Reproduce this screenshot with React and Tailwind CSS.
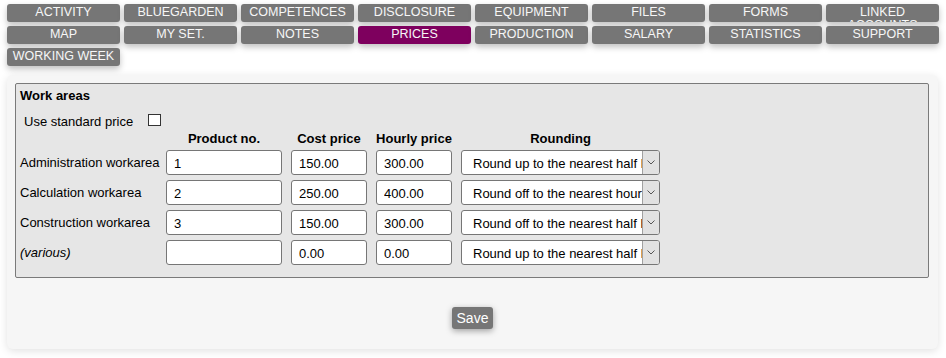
import React from "react";

const tabs = [
  "ACTIVITY", "BLUEGARDEN", "COMPETENCES", "DISCLOSURE", "EQUIPMENT", "FILES", "FORMS", "LINKED ACCOUNTS",
  "MAP", "MY SET.", "NOTES", "PRICES", "PRODUCTION", "SALARY", "STATISTICS", "SUPPORT",
  "WORKING WEEK",
];

const rows = [
  { label: "Administration workarea", no: "1", cost: "150.00", hourly: "300.00", rounding: "Round up to the nearest half hour" },
  { label: "Calculation workarea", no: "2", cost: "250.00", hourly: "400.00", rounding: "Round off to the nearest hour" },
  { label: "Construction workarea", no: "3", cost: "150.00", hourly: "300.00", rounding: "Round off to the nearest half hour" },
  { label: "(various)", italic: true, no: "", cost: "0.00", hourly: "0.00", rounding: "Round up to the nearest half hour" },
];

function Field({ value }) {
  return (
    <input
      readOnly
      defaultValue={value}
      className="w-full h-[25px] px-[7px] pt-[1px] border border-[#767676] rounded-[3px] bg-white text-[13px] text-black outline-none"
    />
  );
}

function Rounding({ value }) {
  return (
    <div className="flex w-[199px] h-[25px] border border-[#767676] rounded-[3px] bg-white overflow-hidden">
      {/* text gets cut by the arrow box */}
      <span className="flex-1 overflow-hidden whitespace-nowrap pl-[11px] pt-[1px] leading-[23px] text-[13px] text-black">
        {value}
      </span>
      <div className="w-[17px] h-full flex items-center justify-center bg-[#e1e1e1] border-l border-[#a0a0a0]">
        <svg width="8" height="5" viewBox="0 0 8 5">
          <path d="M0.5 0.5 L4 4 L7.5 0.5" fill="none" stroke="#555" strokeWidth="1" />
        </svg>
      </div>
    </div>
  );
}

export default function App() {
  return (
    <div className="min-h-screen bg-white pt-[4px] px-[7px] font-['Liberation_Sans',Arial,sans-serif] text-black">
      {/* TABS */}
      <div className="grid grid-cols-[repeat(8,113px)] gap-[4px]">
        {tabs.map((t) => (
          <div
            key={t}
            className={
              "h-[18px] overflow-hidden rounded-[3px] pt-[2px] text-center text-[12.5px] leading-[13px] text-[#f7f7f7] shadow-[0_3px_6px_rgba(0,0,0,0.25)] " +
              (t === "PRICES" ? "bg-[#7e005e]" : "bg-[#767676]")
            }
          >
            {t}
          </div>
        ))}
      </div>

      {/* PANEL */}
      <div className="mt-[9px] w-[931px] rounded-[6px] bg-[#f6f6f6] p-[8px] pb-[20px] shadow-[0_2px_8px_rgba(0,0,0,0.12)]">
        <div className="w-[914px] border border-[#7a7a7a] rounded-[2px] bg-[#e6e6e6] pl-[4px] pt-[4px] pb-[12px] text-[13px]">
          <div className="font-bold leading-[15px]">Work areas</div>

          <div className="mt-[11px] flex items-start leading-[15px]">
            <span className="ml-[4px] w-[124px]">Use standard price</span>
            <div className="w-[13px] h-[12px] border border-[#333] bg-white"></div>
          </div>

          {/* HEADERS */}
          <div className="mt-[2px] grid grid-cols-[137px_116px_76px_76px_199px] gap-x-[9px] font-bold leading-[15px] text-center">
            <div></div>
            <div>Product no.</div>
            <div>Cost price</div>
            <div>Hourly price</div>
            <div>Rounding</div>
          </div>

          {/* ROWS */}
          <div className="mt-[4px] grid grid-cols-[137px_116px_76px_76px_199px] gap-x-[9px] gap-y-[5px]">
            {rows.map((r) => (
              <React.Fragment key={r.label}>
                <div className={"flex items-center h-[25px] whitespace-nowrap " + (r.italic ? "italic" : "")}>
                  {r.label}
                </div>
                <Field value={r.no} />
                <Field value={r.cost} />
                <Field value={r.hourly} />
                <Rounding value={r.rounding} />
              </React.Fragment>
            ))}
          </div>
        </div>

        <div className="mt-[29px] flex justify-center">
          <button className="w-[41px] h-[22px] rounded-[3px] bg-[#767676] text-[14px] leading-[20px] text-white shadow-[0_2px_6px_rgba(0,0,0,0.35)]">
            Save
          </button>
        </div>
      </div>
    </div>
  );
}
